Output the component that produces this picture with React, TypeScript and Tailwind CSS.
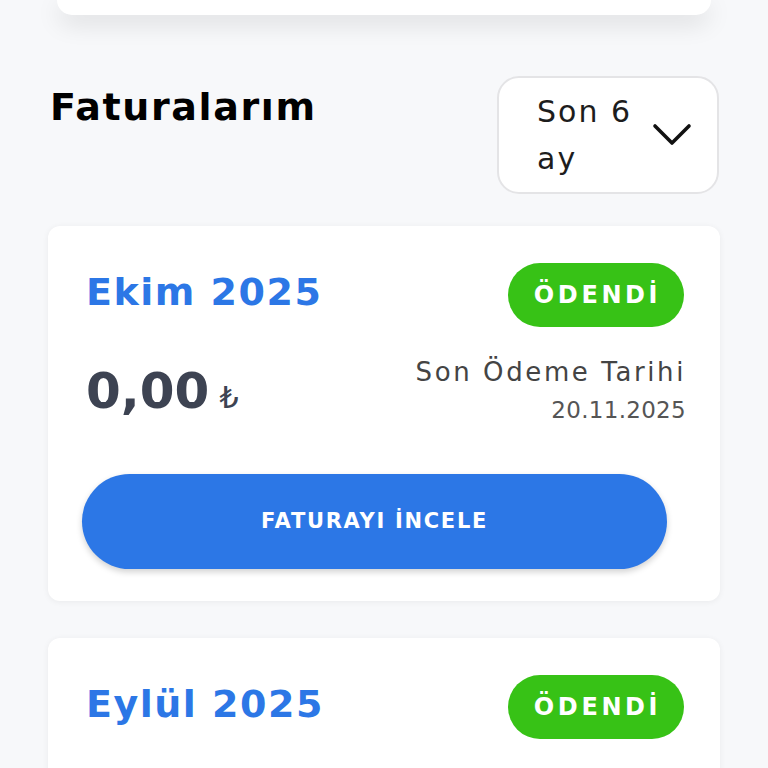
type Invoice = {
  month: string;
  amount: string;
  dueDate: string;
  status: string;
};

const invoices: Invoice[] = [
  { month: 'Ekim 2025', amount: '0,00', dueDate: '20.11.2025', status: 'ÖDENDİ' },
  { month: 'Eylül 2025', amount: '0,00', dueDate: '20.10.2025', status: 'ÖDENDİ' },
];

const Chevron = () => (
  <svg width="40" height="26" viewBox="0 0 40 26" fill="none">
    <polyline points="3,4 20,21 37,4" stroke="#111" strokeWidth="3.6" strokeLinecap="round" strokeLinejoin="round" />
  </svg>
);

const InvoiceCard = ({ invoice }: { invoice: Invoice }) => (
  <div className="mx-[48px] bg-white rounded-[12px] shadow-[0_1px_6px_rgba(0,0,0,0.06)] pl-[38px] pr-[36px] pt-[37px] pb-[32px]">
    <div className="flex items-center justify-between">
      <h3 className="text-[38px] font-bold text-[#2c77e6] leading-none pb-[6px] tracking-[1.5px]">{invoice.month}</h3>
      <span className="h-[64px] w-[176px] rounded-full bg-[#37c216] text-white text-[24px] font-bold flex items-center justify-center tracking-[3.6px] pl-[3px]">
        {invoice.status}
      </span>
    </div>
    <div className="flex items-center justify-between mt-[30px]">
      <div className="flex items-baseline">
        <span className="text-[50px] font-bold text-[#3d4352] leading-none">{invoice.amount}</span>
        <span className="text-[30px] text-[#3d4352] ml-[10px]">₺</span>
      </div>
      <div className="text-right -mr-[2px]">
        <div className="text-[26px] text-[#444] leading-[38px] tracking-[2.6px] -mt-[4px]">Son Ödeme Tarihi</div>
        <div className="text-[23px] text-[#555] leading-[38px] tracking-[0.3px]">{invoice.dueDate}</div>
      </div>
    </div>
    <button className="mt-[45px] -ml-[4px] w-[585px] h-[95px] rounded-full bg-[#2c77e6] text-white text-[21px] font-bold tracking-[1.7px] shadow-[0_3px_6px_rgba(0,0,0,0.18)]">
      FATURAYI İNCELE
    </button>
  </div>
);

export default function App() {
  return (
    <div className="h-[768px] bg-[#f7f8fa] overflow-hidden" style={{ fontFamily: '"DejaVu Sans", sans-serif' }}>
      <div className="mx-[57px] h-[15px] bg-white rounded-b-[32px] shadow-[0_8px_24px_rgba(0,0,0,0.13)]" />
      <div className="flex items-start justify-between pl-[50px] pr-[49px] mt-[61px]">
        <h2 className="text-[38px] font-bold text-black mt-[1px] leading-[60px] tracking-[1.6px]">Faturalarım</h2>
        <div className="w-[222px] h-[118px] rounded-[22px] border-2 border-[#e4e4e6] bg-white flex items-center pl-[38px] pr-[25px] justify-between">
          <span className="text-[30px] text-[#1d1d1d] leading-[47px] w-[110px] tracking-[2px]">Son 6 ay</span>
          <Chevron />
        </div>
      </div>
      <div className="mt-[32px] flex flex-col gap-[37px]">
        {invoices.map((inv) => (
          <InvoiceCard key={inv.month} invoice={inv} />
        ))}
      </div>
    </div>
  );
}
